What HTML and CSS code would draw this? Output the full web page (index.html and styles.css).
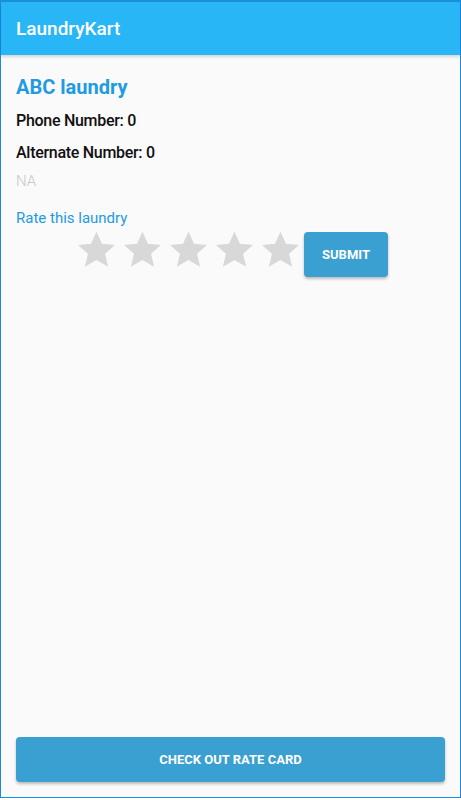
FILE: index.html
```html
<!DOCTYPE html>
<html lang="en">
<head>
	<meta charset="UTF-8">
	<meta name="viewport" content="width=device-width, initial-scale=1">
	<title>LaundryKart</title>
	<link rel="stylesheet" href="styles.css">
</head>
<body>
	<div class="screen">
		<header class="toolbar">LaundryKart</header>
		<section class="content">
			<h1 class="name">ABC laundry</h1>
			<p class="info">Phone Number: 0</p>
			<p class="info">Alternate Number: 0</p>
			<p class="address">NA</p>
			<p class="rate-label">Rate this laundry</p>
			<div class="rating">
				<ul class="stars">
					<li><svg viewBox="0 0 24 24"><path d="M12 1.6l3.2 7.1 7.6.7-5.8 5.1 1.8 7.6L12 18.1l-6.8 4 1.8-7.6-5.8-5.1 7.6-.7z"/></svg></li>
					<li><svg viewBox="0 0 24 24"><path d="M12 1.6l3.2 7.1 7.6.7-5.8 5.1 1.8 7.6L12 18.1l-6.8 4 1.8-7.6-5.8-5.1 7.6-.7z"/></svg></li>
					<li><svg viewBox="0 0 24 24"><path d="M12 1.6l3.2 7.1 7.6.7-5.8 5.1 1.8 7.6L12 18.1l-6.8 4 1.8-7.6-5.8-5.1 7.6-.7z"/></svg></li>
					<li><svg viewBox="0 0 24 24"><path d="M12 1.6l3.2 7.1 7.6.7-5.8 5.1 1.8 7.6L12 18.1l-6.8 4 1.8-7.6-5.8-5.1 7.6-.7z"/></svg></li>
					<li><svg viewBox="0 0 24 24"><path d="M12 1.6l3.2 7.1 7.6.7-5.8 5.1 1.8 7.6L12 18.1l-6.8 4 1.8-7.6-5.8-5.1 7.6-.7z"/></svg></li>
				</ul>
				<button class="btn submit">SUBMIT</button>
			</div>
		</section>
		<footer class="bottom">
			<button class="btn rate-card">CHECK OUT RATE CARD</button>
		</footer>
	</div>
</body>
</html>
```

FILE: styles.css
```css
* {
	margin:0;
	padding:0;
	box-sizing:border-box;
}
html,body {
	height:100%;
	background:#fff;
}
body {
	font-family:Roboto, "Noto Sans", sans-serif;
}
ul {
	list-style:none;
}
.screen {
	display:flex;
	flex-direction:column;
	width:461px;
	height:798px;
	background:#fafafa;
	border:1px solid #1c8ae0;
	border-top:2px solid #1a8fdc;
}
.toolbar {
	height:53px;
	padding:0 15px;
	display:flex;
	align-items:center;
	background:#29b6f6;
	color:#fff;
	font-size:19px;
	font-weight:500;
	box-shadow:0 2px 3px rgba(0,0,0,.15);
	position:relative;
	z-index:1;
}
.content {
	flex:1;
	padding:20px 15px 0;
	display:flex;
	flex-direction:column;
}
.name {
	font-size:20px;
	font-weight:700;
	line-height:24px;
	color:#1e9be2;
}
.info {
	margin-top:10px;
	font-family:"Roboto Medium", Roboto, "Noto Sans", sans-serif;
	font-size:16px;
	font-weight:500;
	line-height:24px;
	color:#111;
	letter-spacing:-.3px;
}
.info + .info {
	margin-top:8px;
}
.address {
	margin-top:4px;
	font-size:15px;
	font-weight:300;
	line-height:24px;
	color:#c8c8c8;
}
.rate-label {
	margin-top:15px;
	font-size:15px;
	line-height:20px;
	color:#1e9be2;
}
.rating {
	margin-top:1px;
	padding-left:3px;
	display:flex;
	justify-content:center;
	align-items:flex-start;
	gap:3px;
}
.stars {
	display:flex;
	gap:5px;
}
.stars li {
	width:41px;
	height:41px;
}
.stars svg {
	display:block;
	width:41px;
	height:41px;
	fill:#d8d8d8;
}
.btn {
	border:none;
	border-radius:4px;
	background:#39a0d1;
	color:#fff;
	font-family:Roboto, "Noto Sans", sans-serif;
	font-size:13px;
	font-weight:700;
	box-shadow:0 2px 3px rgba(0,0,0,.25);
}
.submit {
	margin-top:3px;
	width:84px;
	height:45px;
}
.bottom {
	padding:0 15px 15px;
}
.rate-card {
	width:100%;
	height:45px;
}
```
